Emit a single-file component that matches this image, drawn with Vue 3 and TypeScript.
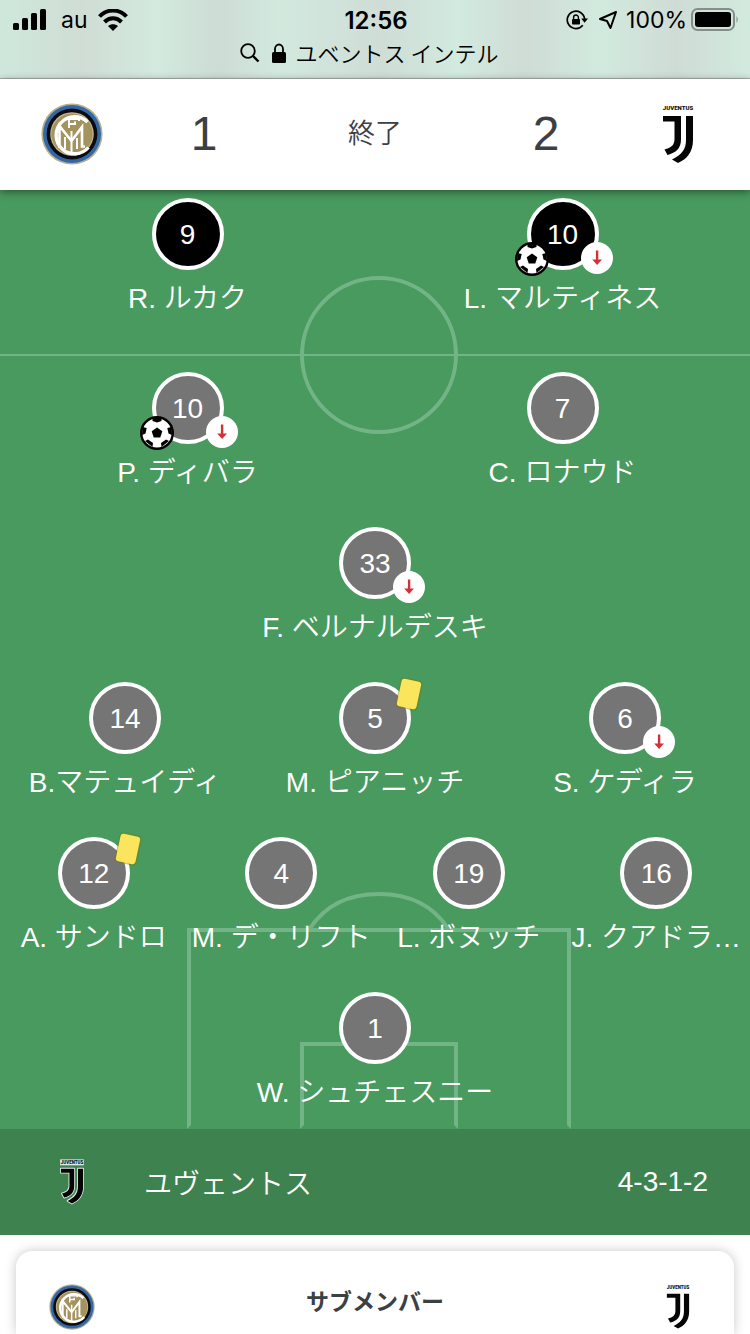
<script setup lang="ts">
import { defineComponent, h } from 'vue'

interface Player {
  number: number
  name: string
  goal?: boolean
  off?: boolean
  card?: boolean
}

const opponents: Player[] = [
  { number: 9, name: 'R. ルカク' },
  { number: 10, name: 'L. マルティネス', goal: true, off: true },
]

const lines: Player[][] = [
  [
    { number: 10, name: 'P. ディバラ', goal: true, off: true },
    { number: 7, name: 'C. ロナウド' },
  ],
  [{ number: 33, name: 'F. ベルナルデスキ', off: true }],
  [
    { number: 14, name: 'B.マテュイディ' },
    { number: 5, name: 'M. ピアニッチ', card: true },
    { number: 6, name: 'S. ケディラ', off: true },
  ],
  [
    { number: 12, name: 'A. サンドロ', card: true },
    { number: 4, name: 'M. デ・リフト' },
    { number: 19, name: 'L. ボヌッチ' },
    { number: 16, name: 'J. クアドラ…' },
  ],
  [{ number: 1, name: 'W. シュチェスニー' }],
]

const halves = [
  { id: 'upper', rows: [opponents], dark: true },
  { id: 'lower', rows: lines, dark: false },
]

const InterCrest = defineComponent({
  render: () =>
    h('svg', { viewBox: '0 0 62 62', role: 'img', 'aria-label': 'インテル' }, [
      h('circle', { cx: 31, cy: 31, r: 30.6, fill: '#b9b08c' }),
      h('circle', { cx: 31, cy: 31, r: 29, fill: '#3268a6' }),
      h('circle', { cx: 31, cy: 31, r: 25.4, fill: '#0a0c12' }),
      h('circle', { cx: 31, cy: 31, r: 21.8, fill: '#c4b68d' }),
      h('circle', { cx: 31, cy: 31, r: 20.6, fill: '#a4925f' }),
      h('g', { fill: 'none', stroke: '#fff' }, [
        h('path', { d: 'M46.500 19A18.5 18.5 0 1 0 47.500 44.500', 'stroke-width': 3.4 }),
        h('path', { d: 'M24 16H38V18M28 15V25M28 21H34V18.500', 'stroke-width': 2 }),
        h('path', { d: 'M18.500 45V23L30.500 38L41 24V43.500H44', 'stroke-width': 2.6 }),
        h('path', { d: 'M30.500 50V28M24 46V34M36 46V35', 'stroke-width': 2 }),
      ]),
    ]),
})

const JuveCrest = defineComponent({
  props: { outlined: Boolean },
  render() {
    const outline = this.outlined
      ? { stroke: '#e6efe8', 'stroke-width': 2.4, 'stroke-linejoin': 'round', 'paint-order': 'stroke' }
      : {}
    return h('svg', { viewBox: '0 0 62 62', role: 'img', 'aria-label': 'ユヴェントス' }, [
      this.outlined ? h('rect', { x: 15, y: 0.5, width: 32, height: 8, fill: '#dfe9e1' }) : null,
      h('text', { x: 31, y: 7, class: 'wordmark', 'text-anchor': 'middle' }, 'JUVENTUS'),
      h('path', {
        d: 'M16 13H34V36C34 46 29 49.500 20.500 52L17.500 46.500C24 44.500 27.500 42.500 27.500 36V18.500H16Z',
        fill: '#050505',
        ...outline,
      }),
      h('path', {
        d: 'M39 13H46V37C46 49 40 56 31 60L25 56.500C34 52 39 47 39 37Z',
        fill: '#050505',
        ...outline,
      }),
    ])
  },
})
</script>

<template>
  <main class="screen">
    <header class="browser">
      <div class="status">
        <div class="status-left">
          <svg class="signal" viewBox="0 0 34 22" aria-hidden="true">
            <rect x="0" y="14" width="6" height="7" rx="1.500" />
            <rect x="9" y="9" width="6" height="12" rx="1.500" />
            <rect x="18" y="4" width="6" height="17" rx="1.500" />
            <rect x="27" y="0" width="6" height="21" rx="1.500" />
          </svg>
          <span class="carrier">au</span>
          <svg class="wifi" viewBox="0 0 30 22" aria-hidden="true">
            <path d="M1.500 7.500C9-.5 21-.5 28.500 7.500" fill="none" stroke="#000" stroke-width="4" />
            <path d="M6.500 13C11.500 8 18.500 8 23.500 13" fill="none" stroke="#000" stroke-width="4" />
            <path d="M15 22L10 17C13 14.500 17 14.500 20 17Z" />
          </svg>
        </div>
        <time class="clock">12:56</time>
        <div class="status-right">
          <svg class="lock-rotate" viewBox="0 0 22 20" aria-hidden="true">
            <path d="M16.800 15.200A8.700 8.700 0 1 1 18.600 9" fill="none" stroke="#000" stroke-width="1.700" />
            <path d="M15.200 8.500H22L18.600 12.800Z" />
            <rect x="6" y="9" width="8" height="5.500" rx=".8" />
            <path d="M7.600 9V7.400A2.400 2.400 0 0 1 12.400 7.400V9" fill="none" stroke="#000" stroke-width="1.400" />
          </svg>
          <svg class="arrow" viewBox="0 0 20 20" aria-hidden="true">
            <path d="M18 2L2 9L9 11L12.500 18Z" fill="none" stroke="#000" stroke-width="2" stroke-linejoin="round" />
          </svg>
          <span class="percent">100%</span>
          <svg class="battery" viewBox="0 0 48 24" aria-hidden="true">
            <rect x="1" y="1" width="42" height="21" rx="5.500" fill="none" stroke="#858f8a" stroke-width="2" />
            <rect x="4" y="4" width="36" height="15" rx="3" />
            <path d="M45.500 8Q48 11.500 45.500 15Z" fill="#858f8a" />
          </svg>
        </div>
      </div>
      <button class="address" type="button">
        <svg class="search" viewBox="0 0 20 20" aria-hidden="true">
          <circle cx="8" cy="8" r="6.800" fill="none" stroke="#000" stroke-width="1.800" />
          <path d="M13 13L18.500 18.500" stroke="#000" stroke-width="2.400" />
        </svg>
        <svg class="lock" viewBox="0 0 14 20" aria-hidden="true">
          <rect x="0" y="9" width="14" height="11" rx="1.500" />
          <path d="M3 10V6A4 4.500 0 0 1 11 6V10" fill="none" stroke="#000" stroke-width="1.800" />
        </svg>
        <span>ユベントス インテル</span>
      </button>
    </header>

    <section class="scoreboard">
      <InterCrest class="crest" />
      <strong class="score">1</strong>
      <span class="state">終了</span>
      <strong class="score">2</strong>
      <JuveCrest class="crest" />
    </section>

    <section class="pitch">
      <div v-for="half in halves" :key="half.id" class="half" :class="half.id">
        <template v-if="!half.dark">
          <i class="mark halfway"></i>
          <i class="mark centre"></i>
          <i class="mark box large"></i>
          <i class="mark box small"></i>
          <svg class="mark arc" viewBox="0 0 146 36" aria-hidden="true">
            <path d="M3 38C18 14 42 2 73 2S128 14 143 38" />
          </svg>
        </template>
        <ul v-for="(row, r) in half.rows" :key="r" class="row">
          <li v-for="player in row" :key="player.number" class="player">
            <div class="shirt" :class="{ dark: half.dark }">
              {{ player.number }}
              <svg v-if="player.goal" class="ball" viewBox="0 0 34 34" role="img" aria-label="ゴール">
                <circle cx="17" cy="17" r="15.800" fill="#fff" stroke="#000" stroke-width="2.400" />
                <path d="M17 11.500L22.300 15.300L20.300 21.500H13.700L11.700 15.300Z" />
                <path d="M12.500 2H21.500V5L17 6.500L12.500 5Z" />
                <path d="M31.500 11L32 19L28.500 17.500L27.300 12Z" />
                <path d="M2.500 11L2 19L5.500 17.500L6.700 12Z" />
                <path d="M29 25L21.500 31L21 27L26 23.500Z" />
                <path d="M5 25L12.500 31L13 27L8 23.500Z" />
              </svg>
              <svg v-if="player.off" class="off" viewBox="0 0 32 32" role="img" aria-label="交代">
                <circle cx="16" cy="16" r="16" fill="#fff" />
                <path d="M14.900 8.500H17.300V17.500H21L16.100 23L11.200 17.500H14.900Z" fill="#d13239" />
              </svg>
              <i v-if="player.card" class="yellow"></i>
            </div>
            <span class="name">{{ player.name }}</span>
          </li>
        </ul>
      </div>
    </section>

    <section class="team">
      <JuveCrest class="crest small-crest" outlined />
      <span class="team-name">ユヴェントス</span>
      <span>4-3-1-2</span>
    </section>

    <section class="subs">
      <InterCrest class="crest small-crest" />
      <h2>サブメンバー</h2>
      <JuveCrest class="crest small-crest" />
    </section>
  </main>
</template>

<style>
body {
  margin: 0;
  background: #fff;
}
</style>

<style scoped>
.screen {
  min-height: 100vh;
  overflow: hidden;
  background: #fff;
  color: #3c4043;
  font-family: "Liberation Sans", "Noto Sans CJK JP", sans-serif;
  font-size: 28px;
  font-weight: 350;
}

svg {
  display: block;
  flex: none;
}

.browser {
  box-sizing: border-box;
  height: 79px;
  border-bottom: 1px solid #a9b0ac;
  background: linear-gradient(90deg, #cfe8dc 0%, #d0ddd5 11%, #d3eade 21%, #cddcd4 29%, #d2e9de 37%, #cfddd6 51%, #d2eadf 61%, #cfdcd5 70%, #d2eade 80%, #cfdcd5 90%, #d2eade 100%);
  color: #000;
  font-family: Inter, "Noto Sans CJK JP", sans-serif;
}

.status {
  display: grid;
  grid-template-columns: 1fr auto 1fr;
  align-items: center;
  height: 40px;
  padding: 0 11px 0 13px;
  font-size: 23px;
  font-weight: 400;
}

.status-left,
.status-right {
  display: flex;
  align-items: center;
}

.status-right {
  justify-content: flex-end;
}

.signal {
  width: 34px;
  height: 22px;
}

.carrier {
  margin: 0 10px 0 14px;
}

.wifi {
  width: 30px;
  height: 22px;
}

.clock {
  font-size: 24px;
  font-weight: 600;
}

.lock-rotate {
  width: 22px;
  height: 20px;
}

.arrow {
  width: 20px;
  height: 20px;
  margin: 0 8px 0 10px;
}

.percent {
  margin-right: 4px;
}

.battery {
  width: 48px;
  height: 24px;
}

.address {
  display: flex;
  align-items: center;
  justify-content: center;
  width: 100%;
  height: 26px;
  padding: 0 12px 0 0;
  border: 0;
  background: none;
  color: #000;
  font: 350 22px/24px "Noto Sans CJK JP", sans-serif;
}

.address span {
  padding-bottom: 2px;
}

.search {
  width: 20px;
  height: 20px;
  margin-right: 12px;
}

.lock {
  width: 14px;
  height: 20px;
  margin-right: 10px;
}

.scoreboard {
  position: relative;
  z-index: 1;
  display: grid;
  grid-template-columns: 144px 120px 1fr 120px 144px;
  align-items: center;
  justify-items: center;
  box-sizing: border-box;
  height: 111px;
  padding-bottom: 2px;
  background: #fff;
  box-shadow: 0 2px 8px rgba(0, 0, 0, 0.45);
}

.crest {
  width: 62px;
  height: 62px;
}

.small-crest {
  width: 46px;
  height: 46px;
}

:deep(.wordmark) {
  font: 900 6px Roboto, sans-serif;
  fill: #111;
}

.score {
  font-size: 48px;
  font-weight: 400;
}

.state {
  padding-bottom: 4px;
  font-size: 27px;
}

.pitch {
  background: #489a5e;
  color: #fff;
}

.half {
  position: relative;
  display: flex;
  flex-direction: column;
  gap: 34px;
  padding: 18px 0 16px;
}

.half.upper {
  padding: 8px 0 35px;
}

.row {
  position: relative;
  display: flex;
  margin: 0;
  padding: 0;
  list-style: none;
}

.player {
  display: flex;
  flex: 1 1 0;
  flex-direction: column;
  align-items: center;
  gap: 9px;
  min-width: 0;
}

.shirt {
  position: relative;
  box-sizing: border-box;
  width: 72px;
  height: 72px;
  border: 4px solid #fff;
  border-radius: 50%;
  background: #757575;
  line-height: 66px;
  text-align: center;
}

.shirt.dark {
  background: #000;
}

.name {
  line-height: 40px;
  white-space: nowrap;
}

.ball {
  position: absolute;
  left: -16px;
  bottom: -10px;
  width: 34px;
  height: 34px;
}

.off {
  position: absolute;
  right: -18px;
  bottom: -8px;
  width: 32px;
  height: 32px;
}

.yellow {
  position: absolute;
  top: -6px;
  right: -12px;
  width: 20px;
  height: 28px;
  border-radius: 3px;
  background: #fbe55c;
  box-shadow: 0 0 1px 1px rgba(120, 120, 0, 0.5);
  transform: rotate(12deg);
}

.mark {
  position: absolute;
  box-sizing: border-box;
  left: calc(50% + 4px);
  transform: translateX(-50%);
}

.halfway {
  top: 0;
  left: 50%;
  width: 100%;
  height: 2px;
  background: #73b487;
}

.centre {
  top: -78px;
  width: 158px;
  height: 158px;
  border: 4px solid #73b487;
  border-radius: 50%;
}

.box {
  bottom: 0;
  border: 4px solid #73b487;
  border-bottom-color: transparent;
}

.large {
  width: 384px;
  height: 201px;
}

.small {
  width: 158px;
  height: 87px;
}

.arc {
  bottom: 201px;
  width: 146px;
  height: 36px;
  fill: none;
  stroke: #73b487;
  stroke-width: 4px;
}

.team {
  display: flex;
  align-items: center;
  height: 106px;
  padding: 0 42px 0 49px;
  background: #3d824f;
  color: #fff;
}

.team-name {
  flex: 1;
  margin-left: 49px;
}

.subs {
  display: flex;
  align-items: flex-start;
  justify-content: space-between;
  box-sizing: border-box;
  height: 83px;
  margin: 16px 16px 0;
  padding: 33px 33px 0;
  border-radius: 16px 16px 0 0;
  background: #fff;
  box-shadow: 0 0 12px rgba(0, 0, 0, 0.22);
}

.subs h2 {
  margin: 0;
  font-size: 23px;
  font-weight: 700;
  line-height: 36px;
}
</style>
